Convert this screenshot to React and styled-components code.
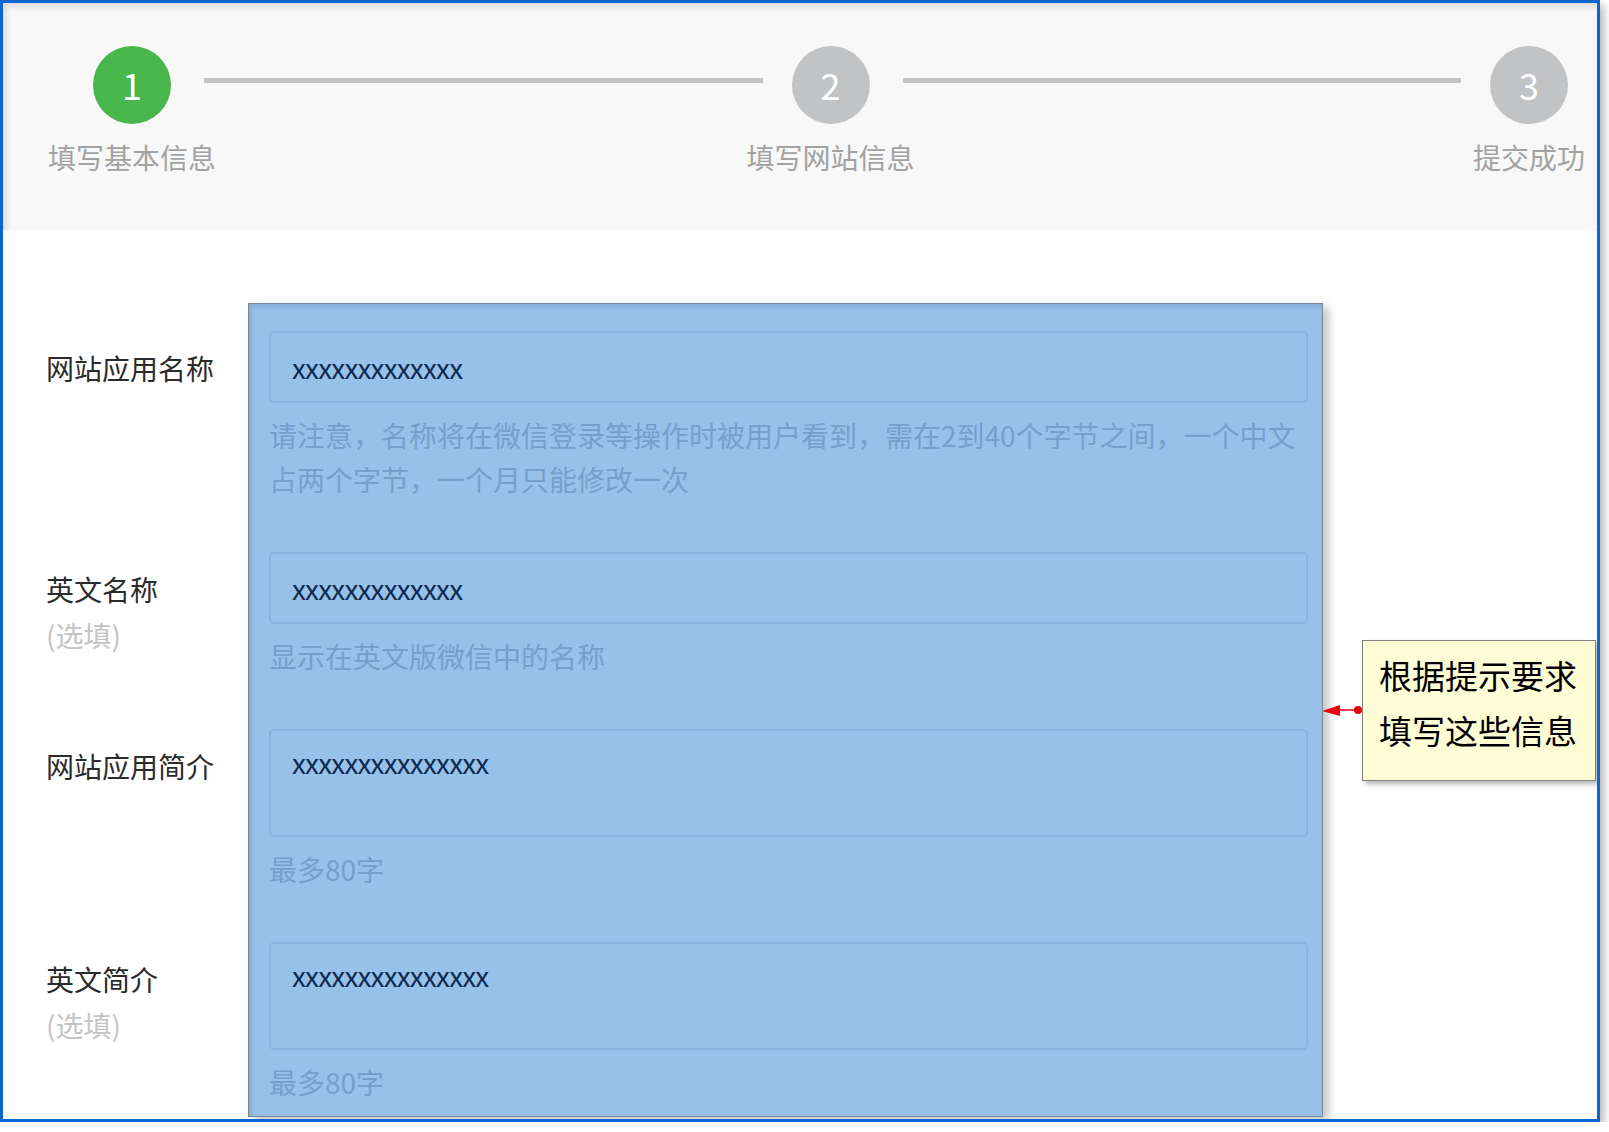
import React from 'react'
import styled, { createGlobalStyle } from 'styled-components'

const GlobalStyle = createGlobalStyle`
  html, body {
    margin: 0;
    padding: 0;
    background: #ffffff;
  }
  body {
    font-family: "Noto Sans CJK SC", "Noto Sans", sans-serif;
  }
  * { box-sizing: border-box; }
`

const steps = [
  { num: 1, label: '填写基本信息', active: true },
  { num: 2, label: '填写网站信息' },
  { num: 3, label: '提交成功' },
]

const fields = [
  {
    label: '网站应用名称',
    value: 'xxxxxxxxxxxxx',
    hint: '请注意，名称将在微信登录等操作时被用户看到，需在2到40个字节之间，一个中文占两个字节，一个月只能修改一次',
    height: 170,
  },
  {
    label: '英文名称',
    optional: true,
    value: 'xxxxxxxxxxxxx',
    hint: '显示在英文版微信中的名称',
    height: 126,
  },
  {
    label: '网站应用简介',
    value: 'xxxxxxxxxxxxxxx',
    hint: '最多80字',
    multiline: true,
    height: 162,
  },
  {
    label: '英文简介',
    optional: true,
    value: 'xxxxxxxxxxxxxxx',
    hint: '最多80字',
    multiline: true,
    height: 162,
  },
]

const App = () => {
  return (
    <>
      <GlobalStyle />
      <Frame>
        <Header>
          {steps.map((s, i) => (
            <React.Fragment key={s.num}>
              {i > 0 && <Connector />}
              <Step>
                <Circle $active={s.active}>{s.num}</Circle>
                <StepLabel>{s.label}</StepLabel>
              </Step>
            </React.Fragment>
          ))}
        </Header>

        <Body>
          <LabelColumn>
            {fields.map((f) => (
              <LabelCell key={f.label} $h={f.height}>
                <Label>{f.label}</Label>
                {f.optional && <Optional>(选填)</Optional>}
              </LabelCell>
            ))}
          </LabelColumn>

          <Panel>
            {fields.map((f) => (
              <Group key={f.label}>
                <Input $multi={f.multiline}>{f.value}</Input>
                <Hint>{f.hint}</Hint>
              </Group>
            ))}
          </Panel>

          <Aside>
            <svg width="40" height="20" viewBox="0 0 40 20">
              <line x1="14" y1="10" x2="39" y2="10" stroke="#e8000b" strokeWidth="1.5" />
              <polygon points="0,11 18,5 18,16" fill="#e8000b" />
              <circle cx="36" cy="10" r="4" fill="#e8000b" />
            </svg>
            <Note>
              根据提示要求
              <br />
              填写这些信息
            </Note>
          </Aside>
        </Body>
      </Frame>
    </>
  )
}

export default App

const Frame = styled.div`
  width: 1600px;
  height: 1122px;
  border: 3px solid #0b66cf;
  background: #fff;
  box-shadow: 4px 5px 8px rgba(0, 0, 0, 0.28);
  overflow: hidden;
  display: flex;
  flex-direction: column;
`

const Header = styled.div`
  height: 227px;
  flex-shrink: 0;
  background: #f8f8f8;
  box-shadow: inset 3px 4px 6px rgba(0, 0, 0, 0.12);
  display: flex;
  align-items: flex-start;
  padding: 43px 29px 0 90px;
`

const Step = styled.div`
  width: 78px;
  display: flex;
  flex-direction: column;
  align-items: center;
`

const Circle = styled.div`
  width: 78px;
  height: 78px;
  border-radius: 50%;
  background: ${(p) => (p.$active ? '#48b74b' : '#c2c3c5')};
  color: #fff;
  font-size: 36px;
  display: flex;
  align-items: center;
  justify-content: center;
  line-height: 1;
  padding-bottom: 2px;
`

const StepLabel = styled.div`
  margin-top: 16px;
  white-space: nowrap;
  font-size: 28px;
  line-height: 34px;
  color: #a2a2a2;
`

const Connector = styled.div`
  flex: 1;
  height: 5px;
  margin: 32px 29px 0 33px;
  background: #c2c3c5;
`

const Body = styled.div`
  flex: 1;
  min-height: 0;
  display: flex;
  align-items: flex-start;
  padding: 73px 0 0 43px;
`

const LabelColumn = styled.div`
  width: 202px;
  flex-shrink: 0;
  display: flex;
  flex-direction: column;
  gap: 51px;
  padding-top: 28px;
`

const LabelCell = styled.div`
  height: ${(p) => p.$h}px;
  padding-top: 20px;
`

const Label = styled.div`
  font-size: 28px;
  line-height: 34px;
  color: #2b2b2b;
  white-space: nowrap;
`

const Optional = styled.div`
  font-size: 28px;
  line-height: 34px;
  margin-top: 12px;
  color: #c4c4c4;
`

const Panel = styled.div`
  width: 1075px;
  flex-shrink: 0;
  display: flex;
  flex-direction: column;
  gap: 51px;
  padding: 27px 14px 12px 20px;
  background: #98c1e9;
  border: 1px solid #7c8794;
  box-shadow: inset 2px 3px 4px rgba(40, 80, 130, 0.18), 6px 4px 8px rgba(0, 0, 0, 0.22);
`

const Group = styled.div`
  display: flex;
  flex-direction: column;
  flex-shrink: 0;
`

const Input = styled.div`
  flex-shrink: 0;
  height: ${(p) => (p.$multi ? '108px' : '72px')};
  border: 2px solid #89b2dc;
  border-radius: 5px;
  padding: ${(p) => (p.$multi ? '14px 21px 0' : '0 21px')};
  display: flex;
  align-items: ${(p) => (p.$multi ? 'flex-start' : 'center')};
  font-size: 28px;
  line-height: 34px;
  letter-spacing: -0.85px;
  color: #0d2b52;
`

const Hint = styled.div`
  margin-top: 10px;
  font-size: 28px;
  line-height: 44px;
  color: #779fcb;
`

const Aside = styled.div`
  flex: 1;
  align-self: stretch;
  display: flex;
  align-items: center;
  padding-right: 1px;
  padding-bottom: 2px;

  svg {
    flex-shrink: 0;
    margin-left: -1px;
  }
`

const Note = styled.div`
  flex: 1;
  height: 141px;
  background: #fefdd6;
  border: 1px solid #808080;
  box-shadow: 3px 3px 5px rgba(0, 0, 0, 0.3);
  padding: 7px 10px 22px 16px;
  font-size: 33px;
  line-height: 55px;
  color: #000;
  white-space: nowrap;
`
